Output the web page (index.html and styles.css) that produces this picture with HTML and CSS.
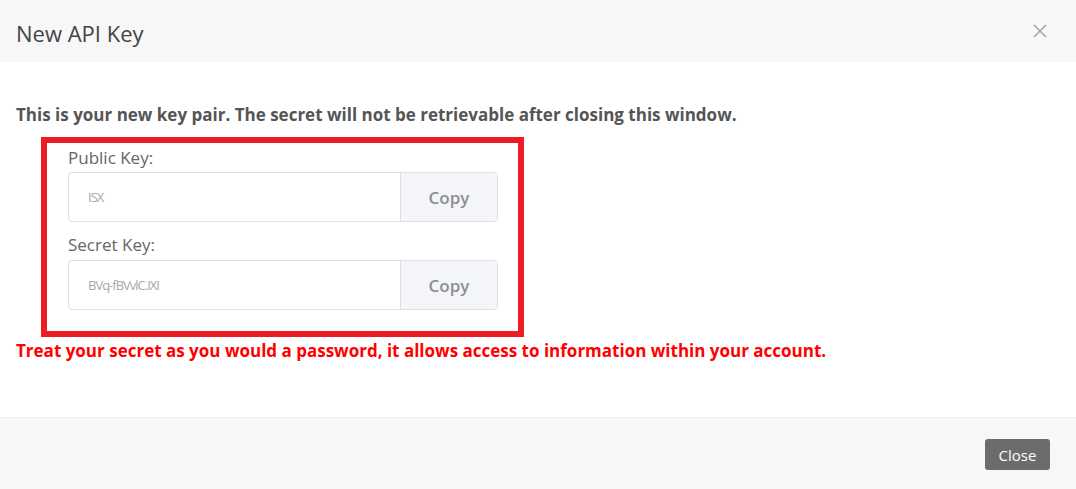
FILE: index.html
```html
<!DOCTYPE html>
<html>
<head>
<meta charset="utf-8">
<link rel="stylesheet" href="styles.css">
</head>
<body>
<div class="modal">
  <div class="modal-header">
    <h4 class="modal-title">New API Key</h4>
    <button class="close-x" aria-label="Close">
      <svg width="14" height="14" viewBox="0 0 14 14"><path d="M1 1L13 13M13 1L1 13" stroke="#9a9a9a" stroke-width="1.3" fill="none"/></svg>
    </button>
  </div>
  <div class="modal-body">
    <p class="lead">This is your new key pair. The secret will not be retrievable after closing this window.</p>
    <div class="highlight">
      <label class="field-label">Public Key:</label>
      <div class="input-group">
        <div class="input-value">ISX</div>
        <button class="addon">Copy</button>
      </div>
      <label class="field-label second">Secret Key:</label>
      <div class="input-group">
        <div class="input-value">BVq-fBVvlC.IXI</div>
        <button class="addon">Copy</button>
      </div>
    </div>
    <p class="warning">Treat your secret as you would a password, it allows access to information within your account.</p>
  </div>
  <div class="modal-footer">
    <button class="btn-close">Close</button>
  </div>
</div>
</body>
</html>
```
FILE: styles.css
```css
* { box-sizing: border-box; }
html, body { margin: 0; padding: 0; background: #fff; }
body {
  font-family: "Open Sans", "Noto Sans", sans-serif;
  color: #555;
  width: 1076px;
  height: 489px;
  overflow: hidden;
}
.modal { display: flex; flex-direction: column; height: 489px; }
.modal-header {
  height: 62px;
  background: #f7f7f7;
  display: flex;
  align-items: center;
  justify-content: space-between;
  padding: 0 29px 0 16px;
}
.modal-title {
  margin: 3px 0 0 0;
  font-size: 22px;
  line-height: 28px;
  font-weight: 400;
  color: #444;
}
.close-x {
  border: 0;
  background: transparent;
  padding: 0;
  display: flex;
  margin-top: -1px;
}
.modal-body {
  flex: 1;
  padding: 42px 16px 0 16px;
}
.lead {
  margin: 0;
  font-size: 17px;
  line-height: 22px;
  font-weight: 700;
  color: #555;
}
.highlight {
  margin: 11px 0 0 25px;
  width: 483px;
  height: 200px;
  border: 6px solid #ed1c24;
  padding: 4px 20px 0 21px;
  display: flex;
  flex-direction: column;
}
.field-label {
  font-size: 17px;
  line-height: 22px;
  color: #666;
  margin-bottom: 3px;
}
.field-label.second { margin-top: 12px; margin-bottom: 4px; }
.input-group {
  display: flex;
  height: 50px;
  border: 1px solid #dfe0e6;
  border-radius: 4px;
  overflow: hidden;
}
.input-value {
  flex: 1;
  display: flex;
  align-items: center;
  padding-left: 19px;
  font-size: 13px;
  color: #a8a8a8;
  letter-spacing: -1px;
}
.addon {
  width: 97px;
  border: 0;
  border-left: 1px solid #dfe0e6;
  background: #f4f5f9;
  font-family: inherit;
  font-size: 17px;
  font-weight: 600;
  color: #8d8d95;
  padding: 0;
}
.warning {
  margin: 3px 0 0 0;
  font-size: 17px;
  line-height: 22px;
  font-weight: 700;
  color: #f00;
}
.modal-footer {
  height: 72px;
  background: #f7f7f7;
  border-top: 1px solid #efefef;
  display: flex;
  justify-content: flex-end;
  align-items: flex-start;
  padding: 21px 26px 0 0;
}
.btn-close {
  width: 65px;
  height: 31px;
  border: 0;
  border-radius: 3px;
  background: #6c6c6c;
  color: #fff;
  font-family: inherit;
  font-size: 15px;
  padding: 0;
}
```
